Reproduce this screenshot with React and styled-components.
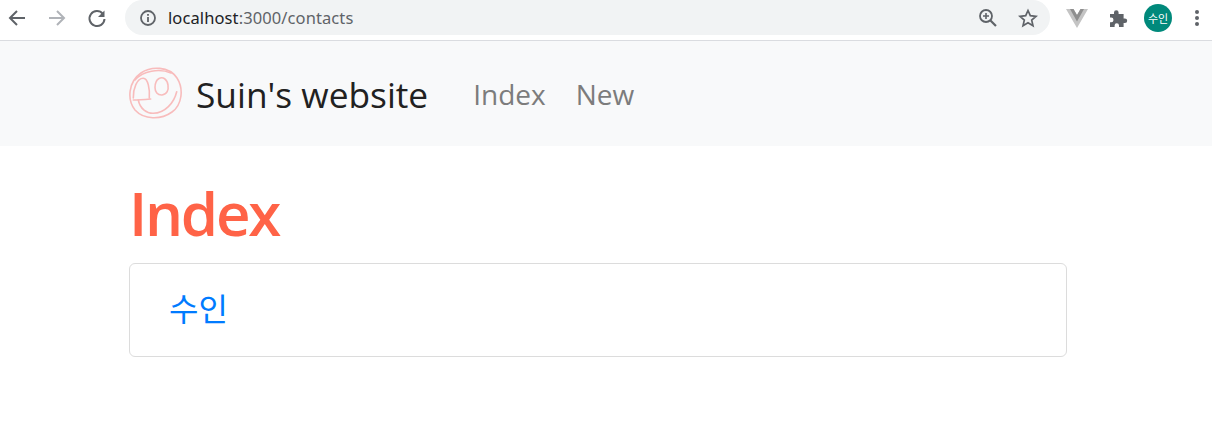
import React from 'react';
import styled, { createGlobalStyle } from 'styled-components';

const GlobalStyle = createGlobalStyle`
    html, body {
        margin: 0;
        padding: 0;
        background: #fff;
        font-family: "Open Sans", "Noto Sans CJK KR", sans-serif;
    }
`;

const Page = styled.div`
    width: 1212px;
    height: 444px;
    overflow: hidden;
`;

const BrowserBar = styled.div`
    height: 40px;
    border-bottom: 1px solid #dadce0;
    display: flex;
    align-items: flex-start;
    background: #fff;
`;
const NavIcons = styled.div`
    display: flex;
    align-items: center;
    gap: 16px;
    padding: 6px 0 0 5px;
    width: 125px;
    box-sizing: border-box;
`;
const IconSlot = styled.span`
    width: 24px;
    height: 24px;
    margin-left: ${props => props.$left || 0}px;
    display: flex;
    align-items: center;
    justify-content: center;
`;
const Omnibox = styled.div`
    width: 925px;
    height: 35px;
    border-radius: 18px;
    background: #f1f3f4;
    display: flex;
    align-items: center;
    padding: 0 10px 0 14px;
    box-sizing: border-box;
`;
const UrlText = styled.span`
    font-family: "Noto Sans", sans-serif;
    font-size: 16.5px;
    margin-left: 11px;
    color: #5f6368;
    flex: 1;
    letter-spacing: 0.1px;
`;
const UrlHost = styled.span`
    color: #202124;
`;
const OmniIcons = styled.div`
    display: flex;
    align-items: center;
    gap: 16px;
`;
const ExtIcons = styled.div`
    display: flex;
    align-items: center;
    margin: 4px 0 0 15px;
`;
const Avatar = styled.span`
    width: 28px;
    height: 28px;
    margin-left: 14px;
    border-radius: 50%;
    background: #00897b;
    color: #fff;
    font-family: "Noto Sans CJK KR", sans-serif;
    font-size: 11px;
    display: flex;
    align-items: center;
    justify-content: center;
`;

const Navbar = styled.nav`
    height: 105px;
    background: #f8f9fa;
    padding-left: 129px;
    display: flex;
    align-items: center;
`;
const Brand = styled.a`
    display: flex;
    align-items: center;
    gap: 13px;
    font-size: 35.3px;
    color: #212121;
    margin-right: 45px;
`;
const NavLink = styled.a`
    font-size: 28px;
    color: #7c7c7c;
    margin-right: ${props => props.$gap || 0}px;
`;

const Main = styled.main`
    padding: 27px 0 0 129px;
    width: 938px;
`;
const Title = styled.h1`
    margin: 0 0 10px;
    font-size: 60px;
    line-height: 80px;
    font-weight: 600;
    letter-spacing: -2.3px;
    color: #ff6347;
`;
const Card = styled.div`
    height: 94px;
    box-sizing: border-box;
    border: 1px solid #dcdcdc;
    border-radius: 6px;
    padding: 0 39px;
    display: flex;
    align-items: center;
`;
const CardLink = styled.a`
    font-family: "Noto Sans CJK KR", sans-serif;
    font-size: 32px;
    color: #007bff;
    margin-top: -7px;
`;

const Arrow = ({ color, flip }) => (
    <svg width="20" height="20" viewBox="0 0 20 20" style={flip ? { transform: 'scaleX(-1)' } : undefined}>
        <path d="M18 10H3M10 3l-7 7 7 7" fill="none" stroke={color} strokeWidth="2" />
    </svg>
);

const App = () => (
    <Page>
        <GlobalStyle />
        <BrowserBar>
            <NavIcons>
                <IconSlot><Arrow color="#5f6368" /></IconSlot>
                <IconSlot><Arrow color="#b0b3b8" flip /></IconSlot>
                <IconSlot>
                    <svg width="20" height="20" viewBox="0 0 20 20">
                        <path d="M15.8 5.8A7.5 7.5 0 1 0 17.5 11" fill="none" stroke="#5f6368" strokeWidth="2" />
                        <path d="M17.5 2.5V9H11z" fill="#5f6368" />
                    </svg>
                </IconSlot>
            </NavIcons>
            <Omnibox>
                <svg width="18" height="18" viewBox="0 0 18 18">
                    <circle cx="9" cy="9" r="7" fill="none" stroke="#5f6368" strokeWidth="1.8" />
                    <path d="M9 8v5M9 5v1.8" stroke="#5f6368" strokeWidth="1.8" />
                </svg>
                <UrlText><UrlHost>localhost</UrlHost>:3000/contacts</UrlText>
                <OmniIcons>
                    <IconSlot>
                        <svg width="20" height="20" viewBox="0 0 20 20">
                            <circle cx="8" cy="8" r="6" fill="none" stroke="#5f6368" strokeWidth="1.8" />
                            <path d="M12.5 12.5L18 18" stroke="#5f6368" strokeWidth="2.2" />
                            <path d="M5 8h6M8 5v6" stroke="#5f6368" strokeWidth="1.6" />
                        </svg>
                    </IconSlot>
                    <IconSlot>
                        <svg width="20" height="20" viewBox="0 0 20 20">
                            <path d="M10 2.5l2.3 5.2 5.7.6-4.300 3.8 1.3 5.6L10 14.8l-5 2.900 1.3-5.600L2 8.300l5.700-.6z" fill="none" stroke="#5f6368" strokeWidth="1.7" />
                        </svg>
                    </IconSlot>
                </OmniIcons>
            </Omnibox>
            <ExtIcons>
                <IconSlot>
                    <svg width="22" height="20" viewBox="0 0 22 20">
                        <path d="M0 1h7.500L11 7l3.500-6H22L11 20z" fill="#c4c4c4" />
                        <path d="M4 1h3.500L11 7l3.500-6H18L11 13.500z" fill="#8f8f8f" />
                    </svg>
                </IconSlot>
                <IconSlot $left={17}>
                    <svg width="20" height="20" viewBox="0 0 20 20">
                        <path d="M2 6h4V4.500a2.300 2.300 0 0 1 4.600 0V6h5v4.500h1.300a2.300 2.300 0 0 1 0 4.600H15.600V19H11v-1.500a2.200 2.200 0 0 0-4.400 0V19H2v-4.800h1.200a2.300 2.300 0 0 0 0-4.600H2z" fill="#5f6368" />
                    </svg>
                </IconSlot>
                <Avatar>수인</Avatar>
                <IconSlot $left={13}>
                    <svg width="6" height="18" viewBox="0 0 6 18">
                        <circle cx="3" cy="3" r="2" fill="#5f6368" />
                        <circle cx="3" cy="9" r="2" fill="#5f6368" />
                        <circle cx="3" cy="15" r="2" fill="#5f6368" />
                    </svg>
                </IconSlot>
            </ExtIcons>
        </BrowserBar>
        <Navbar>
            <Brand>
                <svg width="54" height="54" viewBox="0 0 54 54">
                    <g fill="none" stroke="#f8bcbc" strokeWidth="1.6" strokeLinecap="round">
                        <path d="M12 6C22-1 40-1 48 11c7 11 5 27-5 34-11 8-28 8-37-2C-2 33-1 15 12 6z" />
                        <path d="M6 13C14 4 30 1 42 6" />
                        <path d="M4.300 31C4 22 8 11 14.300 11.300 19 11.500 21 22 20.300 31" />
                        <path d="M4.300 33C10 33 16 32.500 21.700 32" />
                        <path d="M9.300 33C11 42 18 46.500 24.300 46.300 36 46 45 36 47.700 24.700" />
                        <path d="M30 11.500C34 9.500 38 12 39 18 39.800 23 38 27.500 33 28 28.500 28.300 26 25 26 20.500 26 16.500 27.500 13 30 11.500z" />
                    </g>
                </svg>
                Suin's website
            </Brand>
            <NavLink $gap={30}>Index</NavLink>
            <NavLink>New</NavLink>
        </Navbar>
        <Main>
            <Title>Index</Title>
            <Card>
                <CardLink>수인</CardLink>
            </Card>
        </Main>
    </Page>
);

export default App;
